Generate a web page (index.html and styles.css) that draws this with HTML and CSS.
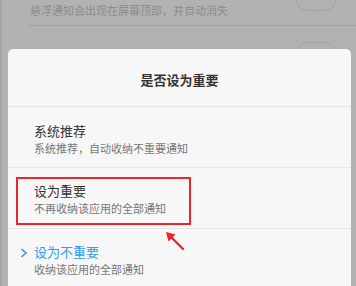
FILE: index.html
```html
<!DOCTYPE html>
<html lang="zh-CN">
<head>
    <meta charset="UTF-8">
    <meta name="viewport" content="width=device-width, initial-scale=1.0">
    <title>通知设置</title>
    <link rel="stylesheet" href="styles.css">
</head>
<body>
    <div class="screen">
        <div class="behind">
            <div class="behind-row">
                <span class="behind-text">悬浮通知会出现在屏幕顶部，并自动消失</span>
                <span class="toggle toggle-top"></span>
            </div>
            <div class="behind-line"></div>
            <div class="behind-row">
                <span class="toggle toggle-bottom"></span>
            </div>
        </div>

        <div class="dialog">
            <div class="dialog-title">是否设为重要</div>

            <div class="option">
                <div class="option-name">系统推荐</div>
                <div class="option-desc">系统推荐，自动收纳不重要通知</div>
            </div>

            <div class="option">
                <div class="option-name">设为重要</div>
                <div class="option-desc">不再收纳该应用的全部通知</div>
                <span class="mark-box"></span>
            </div>

            <div class="option option-active">
                <svg class="check" width="8" height="10" viewBox="0 0 8 10">
                    <path d="M1.5 1 L6 5 L1.5 9" fill="none" stroke="#2c9df0" stroke-width="1.6"/>
                </svg>
                <div class="option-name">设为不重要</div>
                <div class="option-desc">收纳该应用的全部通知</div>
                <svg class="mark-arrow" width="24" height="22" viewBox="0 0 24 22">
                    <path d="M20 19 L8 7" stroke="#e8262d" stroke-width="2.4" stroke-linecap="round"/>
                    <path d="M3 2 L12.5 4.5 L5.5 11.5 Z" fill="#e8262d"/>
                </svg>
            </div>
        </div>
    </div>
</body>
</html>
```

FILE: styles.css
```css
body {
    margin: 0;
    font-family: "Noto Sans CJK SC", "Noto Sans", sans-serif;
}

.screen {
    width: 356px;
    height: 286px;
    overflow: hidden;
    background-color: #b2b2b2;
    border-left: 2px solid #a5a5a5;
    box-sizing: border-box;
}

.behind {
    height: 49px;
    overflow: hidden;
}

.behind-row {
    position: relative;
    height: 25px;
    padding-left: 28px;
}

.behind-text {
    display: block;
    font-size: 11px;
    line-height: 20px;
    color: #8c8c8c;
}

.behind-line {
    height: 1px;
    margin-left: 26px;
    background-color: #a4a4a4;
}

.toggle {
    position: absolute;
    right: 20px;
    width: 38px;
    height: 20px;
    border: 1px solid #a2a2a2;
    border-radius: 11px;
}

.toggle-top {
    top: -11px;
}

.toggle-bottom {
    top: 16px;
}

.dialog {
    margin: 0 5px 0 6px;
    height: 237px;
    background-color: #f7f7f7;
    border-radius: 5px 5px 0 0;
}

.dialog-title {
    padding: 22px 0 17px;
    line-height: 18px;
    font-size: 13px;
    font-weight: bold;
    color: #333;
    text-align: center;
    border-bottom: 1px solid #e6e6e6;
}

.option {
    position: relative;
    height: 61px;
    padding: 14px 0 0 26px;
    box-sizing: border-box;
    border-bottom: 1px solid #e6e6e6;
}

.option:nth-child(2) {
    padding-top: 15px;
}

.option-name {
    font-size: 13px;
    line-height: 18px;
    color: #333;
}

.option-desc {
    margin-top: 1px;
    font-size: 11px;
    line-height: 15px;
    color: #777;
}

.option-active .option-name {
    color: #2c9df0;
}

.check {
    position: absolute;
    left: 12px;
    top: 19px;
}

.mark-box {
    position: absolute;
    left: 8px;
    top: 9px;
    width: 175px;
    height: 48px;
    border: 2px solid #e8262d;
    box-sizing: border-box;
}

.mark-arrow {
    position: absolute;
    left: 155px;
    top: 1px;
}
```
